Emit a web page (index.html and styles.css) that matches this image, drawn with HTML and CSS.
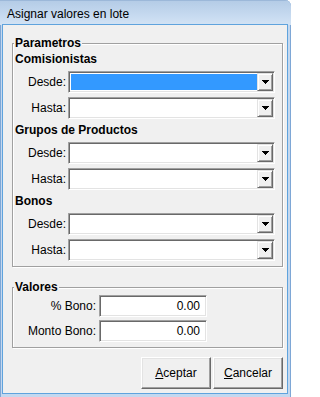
FILE: index.html
```html
<!DOCTYPE html>
<html lang="es">
<head>
<meta charset="utf-8">
<title>Asignar valores en lote</title>
<link rel="stylesheet" href="styles.css">
</head>
<body>
<div class="window">
  <div class="titlebar"><span class="title">Asignar valores en lote</span></div>
  <div class="client">
    <fieldset class="group params">
      <legend>Parametros</legend>

      <div class="section">
        <div class="section-title">Comisionistas</div>
        <div class="row">
          <label>Desde:</label>
          <div class="combo"><div class="combo-field selected"></div><div class="combo-btn"><svg width="7" height="4" viewBox="0 0 7 4"><path d="M0 0h7v1h-1v1h-1v1h-1v1h-1v-1h-1v-1h-1v-1h-1z"/></svg></div></div>
        </div>
        <div class="row">
          <label>Hasta:</label>
          <div class="combo"><div class="combo-field"></div><div class="combo-btn"><svg width="7" height="4" viewBox="0 0 7 4"><path d="M0 0h7v1h-1v1h-1v1h-1v1h-1v-1h-1v-1h-1v-1h-1z"/></svg></div></div>
        </div>
      </div>

      <div class="section">
        <div class="section-title">Grupos de Productos</div>
        <div class="row">
          <label>Desde:</label>
          <div class="combo"><div class="combo-field"></div><div class="combo-btn"><svg width="7" height="4" viewBox="0 0 7 4"><path d="M0 0h7v1h-1v1h-1v1h-1v1h-1v-1h-1v-1h-1v-1h-1z"/></svg></div></div>
        </div>
        <div class="row">
          <label>Hasta:</label>
          <div class="combo"><div class="combo-field"></div><div class="combo-btn"><svg width="7" height="4" viewBox="0 0 7 4"><path d="M0 0h7v1h-1v1h-1v1h-1v1h-1v-1h-1v-1h-1v-1h-1z"/></svg></div></div>
        </div>
      </div>

      <div class="section">
        <div class="section-title">Bonos</div>
        <div class="row">
          <label>Desde:</label>
          <div class="combo"><div class="combo-field"></div><div class="combo-btn"><svg width="7" height="4" viewBox="0 0 7 4"><path d="M0 0h7v1h-1v1h-1v1h-1v1h-1v-1h-1v-1h-1v-1h-1z"/></svg></div></div>
        </div>
        <div class="row">
          <label>Hasta:</label>
          <div class="combo"><div class="combo-field"></div><div class="combo-btn"><svg width="7" height="4" viewBox="0 0 7 4"><path d="M0 0h7v1h-1v1h-1v1h-1v1h-1v-1h-1v-1h-1v-1h-1z"/></svg></div></div>
        </div>
      </div>
    </fieldset>

    <fieldset class="group valores">
      <legend>Valores</legend>
      <div class="vrow">
        <label>% Bono:</label>
        <div class="textbox">0.00</div>
      </div>
      <div class="vrow">
        <label>Monto Bono:</label>
        <div class="textbox">0.00</div>
      </div>
    </fieldset>

    <div class="buttons">
      <button class="btn" type="button"><u>A</u>ceptar</button>
      <button class="btn" type="button"><u>C</u>ancelar</button>
    </div>
  </div>
</div>
</body>
</html>
```
FILE: styles.css
```css
html {
  background: #ffffff;
}

body {
  margin: 0;
  width: 291px;
  height: 397px;
  overflow: hidden;
  font-family: "Liberation Sans", Arial, sans-serif;
  font-size: 12px;
  color: #000;
}

.window {
  width: 291px;
  height: 397px;
  display: flex;
  flex-direction: column;
  background: #c4d8ef;
  border-top-right-radius: 6px;
  overflow: hidden;
  box-shadow: inset 1px 0 0 #7ea7d6, inset -1px 0 0 #7ea7d6;
}

.titlebar {
  height: 25px;
  flex: none;
  display: flex;
  align-items: center;
  padding-left: 7px;
  box-sizing: border-box;
  background: linear-gradient(#b3cbe6, #c9dcf1 70%, #d3e3f4);
  box-shadow: inset 0 1px 0 #9cb8d9;
}

.title {
  font-family: "Liberation Sans", Arial, sans-serif;
  font-size: 12px;
  line-height: 14px;
  color: #000;
  padding-top: 3px;
}

.client {
  flex: 1;
  margin: 0 4px 4px 3px;
  background: #f0f0f0;
  display: flex;
  flex-direction: column;
  padding: 11px 4px 4px 9px;
  box-shadow: 0 0 0 1px #5fa3dd;
}

.group {
  margin: 0;
  padding: 2px 7px 5px 2px;
  min-width: 0;
  border: 1px solid #a0a0a0;
  box-shadow: 1px 1px 0 #ffffff, inset 1px 1px 0 #ffffff;
}

.group legend {
  padding: 0 1px;
  margin-left: -1px;
  font-weight: bold;
  line-height: 14px;
  background: #f0f0f0;
}

.section + .section {
  margin-top: 4px;
}

.section-title {
  font-weight: bold;
  line-height: 14px;
  margin-bottom: 5px;
}

.row {
  display: grid;
  grid-template-columns: 51px 207px;
  column-gap: 2px;
  align-items: center;
  height: 22px;
}

.row + .row {
  margin-top: 4px;
}

.row label,
.vrow label {
  text-align: right;
  line-height: 14px;
  white-space: nowrap;
}

.combo {
  height: 22px;
  box-sizing: border-box;
  display: flex;
  border: 1px solid;
  border-color: #a0a0a0 #ffffff #ffffff #a0a0a0;
  box-shadow: inset 1px 1px 0 #696969, inset -1px -1px 0 #e3e3e3;
  padding: 1px;
  background: #ffffff;
}

.combo-field {
  flex: 1;
  background: #ffffff;
}

.combo-field.selected {
  background: #3399ff;
  margin: 1px 0 1px 1px;
}

.combo-btn {
  width: 16px;
  flex: none;
  box-sizing: border-box;
  background: #f0f0f0;
  border: 1px solid;
  border-color: #e3e3e3 #696969 #696969 #e3e3e3;
  box-shadow: inset 1px 1px 0 #ffffff, inset -1px -1px 0 #a0a0a0;
  display: flex;
  align-items: center;
  justify-content: center;
}

.combo-btn svg {
  display: block;
  fill: #000;
  shape-rendering: crispEdges;
}

.valores {
  margin-top: 13px;
  padding-top: 1px;
}

.vrow {
  display: grid;
  grid-template-columns: 81px 108px;
  column-gap: 3px;
  align-items: center;
  height: 22px;
}

.vrow + .vrow {
  margin-top: 3px;
}

.textbox {
  height: 22px;
  box-sizing: border-box;
  border: 1px solid;
  border-color: #a0a0a0 #ffffff #ffffff #a0a0a0;
  box-shadow: inset 1px 1px 0 #696969, inset -1px -1px 0 #e3e3e3;
  background: #ffffff;
  text-align: right;
  padding: 0 6px 0 0;
  line-height: 20px;
}

.buttons {
  margin-top: auto;
  display: flex;
  justify-content: flex-end;
  gap: 2px;
}

.btn {
  width: 70px;
  height: 32px;
  margin: 0;
  padding: 0;
  font-family: "Liberation Sans", Arial, sans-serif;
  font-size: 12px;
  color: #000;
  background: #f0f0f0;
  border: 1px solid;
  border-color: #ffffff #696969 #696969 #ffffff;
  box-shadow: inset -1px -1px 0 #a0a0a0, inset 1px 1px 0 #e3e3e3;
  border-radius: 0;
}
```
